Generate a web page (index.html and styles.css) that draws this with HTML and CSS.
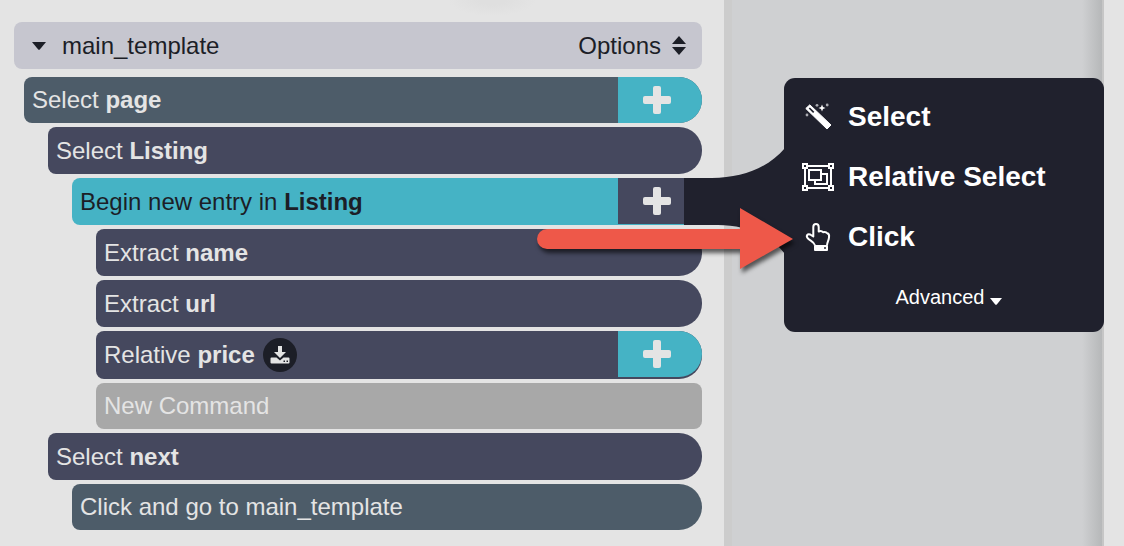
FILE: index.html
```html
<!DOCTYPE html>
<html lang="en">
<head>
    <meta charset="UTF-8">
    <meta name="viewport" content="width=device-width, initial-scale=1.0">
    <title>main_template</title>
    <link rel="stylesheet" href="styles.css">
</head>
<body>
    <main class="panel">
        <header class="template-header">
            <button type="button" class="template-name">
                <svg class="caret" width="14" height="8" viewBox="0 0 14 8"><path d="M0 0h14L8 7.3q-1 1-2 0z" fill="currentColor"/></svg>
                main_template
            </button>
            <button type="button" class="options">
                Options
                <svg width="14" height="19" viewBox="0 0 14 19"><path d="M7 0l7 8H0zM0 11h14l-7 8z" fill="currentColor"/></svg>
            </button>
        </header>

        <div class="commands">
            <div class="command slate">
                <span class="label">Select <b>page</b></span>
                <button type="button" class="add" aria-label="Add command">
                    <svg width="28" height="28" viewBox="0 0 28 28"><rect x="10" width="8" height="28" rx="2"/><rect y="10" width="28" height="8" rx="2"/></svg>
                </button>
            </div>
            <div class="command level-1">
                <span class="label">Select <b>Listing</b></span>
            </div>
            <div class="command level-2 selected">
                <span class="label">Begin new entry in <b>Listing</b></span>
                <button type="button" class="add" aria-label="Add command">
                    <svg width="28" height="28" viewBox="0 0 28 28"><rect x="10" width="8" height="28" rx="2"/><rect y="10" width="28" height="8" rx="2"/></svg>
                </button>

                <svg class="connector" width="101" height="106" viewBox="0 0 101 106">
                    <path d="M0 30H28C58 30 84 20 101 0V106C86 86 60 77 34 77H0z" fill="#20212d"/>
                </svg>
                <div class="menu">
                    <button type="button" class="menu-item">
                        <svg width="32" height="28" viewBox="0 0 32 28">
                            <path d="M3.800 5.500L7.800 1.800 29 22 25 26z" fill="#fff" stroke="#fff" stroke-linejoin="round"/>
                            <path d="M7.300 5l4.400 4.400" stroke="#20212d" stroke-width="1.700"/>
                            <path d="M20 1.500l1 2.500 2.500 1-2.500 1-1 2.500-1-2.500-2.500-1 2.500-1z" fill="#fff"/>
                            <g fill="#a9aab0"><circle cx="15" cy="2.300" r="1.400"/><circle cx="25.200" cy="2" r="1.400"/><circle cx="5" cy="12" r="1.400"/></g>
                        </svg>
                        Select
                    </button>
                    <button type="button" class="menu-item">
                        <svg width="32" height="28" viewBox="0 0 32 28" fill="none" stroke="#fff" stroke-width="2">
                            <path d="M1 1h4v4H1zM27 1h4v4h-4zM1 23h4v4H1zM27 23h4v4h-4z"/>
                            <path d="M6 3h20M6 25h20M3 6v16M29 6v16"/>
                            <path d="M7 7h12v10H7z"/>
                            <path d="M20 11h5v10H13v-4"/>
                        </svg>
                        Relative Select
                    </button>
                    <button type="button" class="menu-item">
                        <svg width="32" height="28" viewBox="0 0 32 28">
                            <path d="M13 22.5C12 18.5 8.5 18 6 15.5 3.5 13 5.500 10.300 8.200 11.500L11.300 13.500V4C11.300 0 16.700 0 16.700 4V8.500C18.200 7.800 20 8 21 9.200 23 8.700 24.500 9.200 25.200 10.300 27.200 10.700 27.400 12.200 27 14.500 26.700 18 25 19 25 22.500" fill="none" stroke="#fff" stroke-width="2" stroke-linejoin="round"/>
                            <rect x="12" y="22" width="14" height="6" rx="1" fill="#fff"/>
                            <circle cx="23" cy="25" r="1" fill="#20212d"/>
                        </svg>
                        Click
                    </button>
                    <button type="button" class="advanced">
                        Advanced
                        <svg class="caret" width="12" height="7" viewBox="0 0 12 7"><path d="M0 0h12L7 6.300q-1 1-2 0z" fill="currentColor"/></svg>
                    </button>
                </div>
                <svg class="arrow" width="262" height="70" viewBox="0 0 262 70">
                    <path d="M10 21H203V0L256 31 203 61V41H10a10 10 0 0 1 0-20z" fill="#ee5849"/>
                </svg>
            </div>
            <div class="command level-3">
                <span class="label">Extract <b>name</b></span>
            </div>
            <div class="command level-3">
                <span class="label">Extract <b>url</b></span>
            </div>
            <div class="command level-3 relative">
                <span class="label">Relative <b>price</b></span>
                <span class="badge">
                    <svg width="20" height="18" viewBox="0 0 20 18">
                        <path d="M8 0h4v6h4l-6 6-6-6h4z" fill="#e4e4e4"/>
                        <path d="M1.500 11.500H6.500L10 14.500 13.500 11.500H18.500Q19.500 11.500 19.500 12.500V16.500Q19.500 17.500 18.500 17.500H1.500Q.5 17.500 .5 16.500V12.500Q.5 11.500 1.500 11.500z" fill="#e4e4e4"/>
                        <path d="M13.500 14.500h1.500v1.500h-1.500zM16.500 14.500h1.500v1.500h-1.500z" fill="#1c1e27"/>
                    </svg>
                </span>
                <button type="button" class="add" aria-label="Add command">
                    <svg width="28" height="28" viewBox="0 0 28 28"><rect x="10" width="8" height="28" rx="2"/><rect y="10" width="28" height="8" rx="2"/></svg>
                </button>
            </div>
            <button type="button" class="command level-3 new-command">New Command</button>
            <div class="command level-1">
                <span class="label">Select <b>next</b></span>
            </div>
            <div class="command level-2 slate">
                <span class="label">Click and go to main_template</span>
            </div>
        </div>
    </main>
    <div class="preview"></div>
    <div class="edge"></div>
</body>
</html>
```
FILE: styles.css
```css
body {
    margin: 0;
    min-height: 100vh;
    display: grid;
    grid-template-columns: minmax(0, 1fr) 380px 20px;
    background: #e4e4e4;
    color: #1c1e27;
    font-family: "Liberation Sans", Arial, sans-serif;
    font-size: 24px;
    line-height: 28px;
    overflow: hidden;
}

button {
    margin: 0;
    padding: 0;
    border: none;
    background: none;
    color: inherit;
    font: inherit;
    text-align: left;
    cursor: pointer;
}

svg {
    display: block;
    flex-shrink: 0;
}

.panel {
    padding: 22px 22px 16px 14px;
    background: radial-gradient(44px 16px at 68% 0, #dfdfdf 30%, #e4e4e4 100%);
}

.template-header {
    display: flex;
    justify-content: space-between;
    align-items: center;
    height: 47px;
    padding: 0 16px 0 18px;
    border-radius: 8px;
    background: #c6c6cf;
}

.template-name {
    display: flex;
    align-items: center;
    gap: 16px;
}

.options {
    display: flex;
    align-items: center;
    gap: 11px;
}

.commands {
    display: flex;
    flex-direction: column;
    gap: 4px;
    padding: 8px 0 0 10px;
}

.command {
    position: relative;
    display: flex;
    align-items: center;
    height: 47px;
    padding-left: 8px;
    border-radius: 8px 23px 23px 8px;
    background: #45485e;
    color: #e4e4e4;
}

/* Nesting of the commands */
.level-1 {
    margin-left: 24px;
}

.level-2 {
    margin-left: 48px;
}

.level-3 {
    margin-left: 72px;
}

.slate {
    height: 46px;
    background: #4d5c69;
}

.relative {
    height: 48px;
}

.selected {
    z-index: 1;
    border-radius: 8px 0 0 8px;
    background: #45b3c5;
    color: #1c1e27;
}

.new-command {
    height: 46px;
    border-radius: 8px;
    background: #a8a8a8;
}

.add {
    display: flex;
    justify-content: center;
    align-items: center;
    align-self: flex-start;
    width: 84px;
    height: 46px;
    margin-left: auto;
    padding-right: 6px;
    box-sizing: border-box;
    border-radius: 0 23px 23px 0;
    background: #45b3c5;
}

.add svg {
    fill: #e4e4e4;
}

.selected .add {
    border-radius: 0;
    background: #45485e;
}

.badge {
    display: flex;
    justify-content: center;
    align-items: center;
    width: 34px;
    height: 34px;
    margin-left: 8px;
    border-radius: 50%;
    background: #1c1e27;
}

/* Menu that opens from the selected command */
.connector {
    position: absolute;
    top: -30px;
    left: calc(100% - 18px);
}

.menu {
    position: absolute;
    top: -100px;
    left: calc(100% + 82px);
    display: flex;
    flex-direction: column;
    width: 320px;
    padding: 9px 0 5px;
    box-sizing: border-box;
    border-radius: 11px;
    background: #20212d;
    color: #ffffff;
}

.menu-item {
    display: flex;
    align-items: center;
    gap: 14px;
    height: 60px;
    padding-left: 18px;
    font-size: 28px;
    font-weight: bold;
}

.advanced {
    display: flex;
    justify-content: center;
    align-items: center;
    gap: 6px;
    height: 60px;
    padding-left: 10px;
    font-size: 20px;
}

.advanced .caret {
    margin-top: 8px;
}

.arrow {
    position: absolute;
    top: 30px;
    right: -97px;
    filter: drop-shadow(2px 4px 2px rgba(0, 0, 0, 0.6));
    pointer-events: none;
}

.preview {
    background:
        linear-gradient(to right, transparent, #b6b8b9) right 2px top / 20px 100% no-repeat,
        linear-gradient(#c6c6c6, #c6c6c6) right top / 2px 100% no-repeat,
        linear-gradient(#cccccc, #cccccc) left top / 8px 100% no-repeat,
        #cfd0d2;
}

.edge {
    background: #e4e4e4;
}
```
